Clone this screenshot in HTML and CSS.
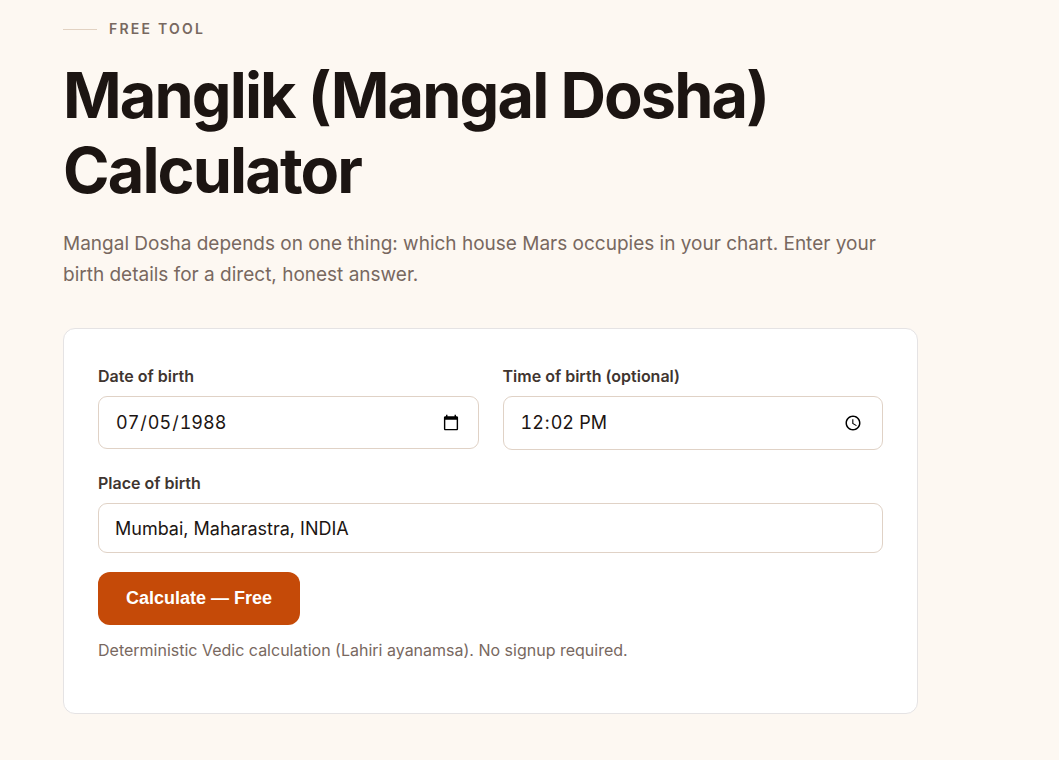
FILE: index.html
```html
<!DOCTYPE html>
<html lang="en">
  <head>
    <meta charset="UTF-8" />
    <meta name="viewport" content="width=device-width, initial-scale=1.0" />
    <title>Manglik (Mangal Dosha) Calculator</title>
    <link rel="stylesheet" href="styles.css">
  </head>
  <body>
    <main class="tool">
      <p class="eyebrow">Free tool</p>
      <h1>Manglik (Mangal Dosha) Calculator</h1>
      <p class="lead">Mangal Dosha depends on one thing: which house Mars occupies in your chart. Enter your birth details for a direct, honest answer.</p>

      <form class="card">
        <div class="row">
          <div class="field">
            <label for="dob">Date of birth</label>
            <input type="date" id="dob" name="dob" value="1988-07-05" />
          </div>
          <div class="field">
            <label for="tob">Time of birth (optional)</label>
            <input type="time" id="tob" name="tob" value="12:02" />
          </div>
        </div>
        <div class="field">
          <label for="place">Place of birth</label>
          <input type="text" id="place" name="place" value="Mumbai, Maharastra, INDIA" />
        </div>
        <button type="submit">Calculate — Free</button>
        <p class="note">Deterministic Vedic calculation (Lahiri ayanamsa). No signup required.</p>
      </form>
    </main>
  </body>
</html>
```

FILE: styles.css
```css
* {
  margin: 0;
  padding: 0;
  box-sizing: border-box;
}

body {
  background: #fdf8f2;
  color: #1c1512;
  font-family: 'Inter', sans-serif;
}

.tool {
  max-width: 981px;
  padding: 18px 63px 46px;
}

.eyebrow {
  display: flex;
  align-items: center;
  gap: 12px;
  color: #786860;
  font-size: 14px;
  font-weight: 600;
  line-height: 22px;
  letter-spacing: 0.16em;
  text-transform: uppercase;
}
.eyebrow::before {
  content: '';
  width: 34px;
  height: 1px;
  background: #e2d2c2;
}

h1 {
  margin-top: 18px;
  font-size: 63px;
  font-weight: 700;
  line-height: 75px;
  letter-spacing: -0.03em;
}

.lead {
  margin-top: 20px;
  color: #786860;
  font-size: 19px;
  line-height: 31px;
}

.card {
  margin-top: 38px;
  padding: 34px 34px 50px;
  background: #fff;
  border: 1px solid #e5e3e4;
  border-radius: 12px;
}

.row {
  display: grid;
  grid-template-columns: 1fr 1fr;
  align-items: start;
  gap: 24px;
  margin-bottom: 20px;
}

label {
  display: block;
  margin-bottom: 7px;
  color: #403530;
  font-size: 16px;
  font-weight: 600;
  line-height: 26px;
}

input {
  display: block;
  width: 100%;
  height: 50px;
  padding: 0 16px;
  background: #fff;
  border: 1px solid #e0d2c6;
  border-radius: 9px;
  color: #1c1512;
  font-family: inherit;
  font-size: 18px;
}
input[type="date"],
input[type="time"] {
  height: 53px;
  font-variant-numeric: tabular-nums;
}
input[type="time"] {
  height: 54px;
}

button {
  height: 53px;
  margin-top: 19px;
  padding: 0 28px;
  background: #c54a08;
  border: none;
  border-radius: 12px;
  color: #fff;
  font-family: 'Liberation Sans', sans-serif;
  font-size: 18px;
  font-weight: 700;
  cursor: pointer;
}

.note {
  margin-top: 12px;
  color: #786860;
  font-size: 16px;
  line-height: 26px;
}
```
